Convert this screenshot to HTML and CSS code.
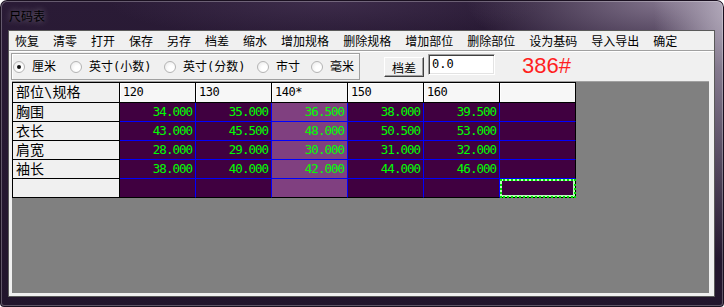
FILE: index.html
```html
<!DOCTYPE html>
<html>
<head>
    <title>尺码表</title>
    <link rel="stylesheet" href="styles.css">
</head>
<body>
    <div class="window">
        <div class="titlebar"><span>尺码表</span></div>
        <div class="client">
            <div class="menubar">
                <span>恢复</span>
                <span>清零</span>
                <span>打开</span>
                <span>保存</span>
                <span>另存</span>
                <span>档差</span>
                <span>缩水</span>
                <span>增加规格</span>
                <span>删除规格</span>
                <span>增加部位</span>
                <span>删除部位</span>
                <span>设为基码</span>
                <span>导入导出</span>
                <span>确定</span>
            </div>

            <div class="toolbar">
                <div class="units">
                    <label class="radio cm checked"><i></i>厘米</label>
                    <label class="radio inch"><i></i>英寸(小数)</label>
                    <label class="radio frac"><i></i>英寸(分数)</label>
                    <label class="radio cun"><i></i>市寸</label>
                    <label class="radio mm"><i></i>毫米</label>
                </div>
                <button class="btn">档差</button>
                <div class="field">0.0</div>
                <div class="code">386#</div>
            </div>

            <!-- size grid -->
            <div class="canvas">
                <div class="sheet">
                    <div class="corner">部位\规格</div>
                    <div class="colhead">120</div>
                    <div class="colhead">130</div>
                    <div class="colhead">140*</div>
                    <div class="colhead">150</div>
                    <div class="colhead">160</div>
                    <div class="colhead last"></div>

                    <div class="rowhead">胸围</div>
                    <div class="cell">34.000</div>
                    <div class="cell">35.000</div>
                    <div class="cell base">36.500</div>
                    <div class="cell">38.000</div>
                    <div class="cell">39.500</div>
                    <div class="cell last"></div>

                    <div class="rowhead">衣长</div>
                    <div class="cell">43.000</div>
                    <div class="cell">45.500</div>
                    <div class="cell base">48.000</div>
                    <div class="cell">50.500</div>
                    <div class="cell">53.000</div>
                    <div class="cell last"></div>

                    <div class="rowhead">肩宽</div>
                    <div class="cell">28.000</div>
                    <div class="cell">29.000</div>
                    <div class="cell base">30.000</div>
                    <div class="cell">31.000</div>
                    <div class="cell">32.000</div>
                    <div class="cell last"></div>

                    <div class="rowhead">袖长</div>
                    <div class="cell">38.000</div>
                    <div class="cell">40.000</div>
                    <div class="cell base">42.000</div>
                    <div class="cell">44.000</div>
                    <div class="cell">46.000</div>
                    <div class="cell last"></div>

                    <div class="rowhead bottom"></div>
                    <div class="cell bottom"></div>
                    <div class="cell bottom"></div>
                    <div class="cell base bottom"></div>
                    <div class="cell bottom"></div>
                    <div class="cell bottom"></div>
                    <div class="cell last bottom focus"></div>
                </div>
            </div>
        </div>
    </div>
</body>
</html>
```

FILE: styles.css
```css
body {
    margin: 0;
    background-color: #ffffff;
    font-family: "DejaVu Sans Mono", "Noto Sans CJK SC", monospace;
    font-size: 12px;
    color: #000;
}
.window {
    width: 724px;
    height: 307px;
    box-sizing: border-box;
    padding: 0 9px 10px 8px;
    display: flex;
    flex-direction: column;
    border-radius: 7px 7px 4px 4px;
    background:
        radial-gradient(ellipse 70px 260px at 100% 0%, rgba(190, 182, 198, 0.85), rgba(190, 182, 198, 0) 100%),
        radial-gradient(ellipse 200px 70px at 92% 0%, rgba(140, 126, 150, 0.9), rgba(140, 126, 150, 0) 100%),
        radial-gradient(ellipse 220px 40px at 45% 0%, rgba(70, 52, 84, 0.7), rgba(70, 52, 84, 0) 100%),
        linear-gradient(180deg, #2a1b36 0%, #22152c 100%);
    box-shadow: inset 0 0 0 1px #1a1020, inset 0 0 0 2px rgba(255, 255, 255, 0.28);
}
.titlebar {
    height: 30px;
    line-height: 31px;
    padding-left: 1px;
    font-family: "Noto Sans CJK SC", sans-serif;
    font-size: 12px;
}
.titlebar span {
    color: #000;
    text-shadow: 0 0 6px rgba(255, 255, 255, 0.45);
}
.client {
    flex: 1;
    display: flex;
    flex-direction: column;
    background-color: #f0f0f0;
    border: 1px solid #5a5a5a;
}
.menubar {
    height: 19px;
    line-height: 19px;
    display: flex;
    gap: 14px;
    padding-left: 6px;
    border-bottom: 1px solid #a0a0a0;
    font-family: "Noto Sans CJK SC", sans-serif;
}
.toolbar {
    height: 30px;
    display: flex;
    align-items: flex-start;
    padding-left: 2px;
    box-shadow: inset 0 1px #ffffff;
}
.units {
    margin-top: 2px;
    width: 349px;
    height: 27px;
    box-sizing: border-box;
    display: flex;
    align-items: center;
    padding-left: 1px;
    border: 1px solid #a0a0a0;
    box-shadow: inset 1px 1px #ffffff;
}
.radio {
    display: flex;
    align-items: center;
    gap: 7px;
    line-height: 16px;
}
.radio i {
    width: 12px;
    height: 12px;
    box-sizing: border-box;
    border-radius: 50%;
    border: 1px solid #b4b4b4;
    background: radial-gradient(circle at 65% 65%, #ffffff 30%, #e6e6e6 100%);
    display: flex;
    align-items: center;
    justify-content: center;
}
.radio.checked i::after {
    content: "";
    width: 4px;
    height: 4px;
    border-radius: 50%;
    background-color: #111;
}
.radio.cm { width: 57px; }
.radio.inch { width: 94px; }
.radio.frac { width: 93px; }
.radio.cun { width: 54px; }
.radio.mm { width: 48px; }
.btn {
    margin: 6px 0 0 24px;
    width: 40px;
    height: 20px;
    padding: 0;
    font-family: "Noto Sans CJK SC", sans-serif;
    font-size: 12px;
    line-height: 17px;
    background-color: #f0f0f0;
    border: 1px solid;
    border-color: #ffffff #404040 #404040 #ffffff;
    box-shadow: inset -1px -1px #a0a0a0;
}
.field {
    margin: 3px 0 0 4px;
    width: 67px;
    height: 21px;
    box-sizing: border-box;
    padding-left: 3px;
    line-height: 19px;
    background-color: #ffffff;
    border: 1px solid;
    border-color: #a0a0a0 #ffffff #ffffff #a0a0a0;
    box-shadow: inset 1px 1px #404040, inset -1px -1px #e3e3e3;
}
.code {
    margin: 4px 0 0 27px;
    font-family: "Liberation Sans", Arial, sans-serif;
    font-size: 22px;
    line-height: 22px;
    color: #ff1f1f;
}
.canvas {
    flex: 1;
    margin: 0 5px 3px 3px;
    background-color: #808080;
    border-top: 1px solid #a0a0a0;
}
.sheet {
    width: max-content;
    display: grid;
    grid-template-columns: 107px repeat(6, 76px);
    grid-template-rows: 20px repeat(5, 19px);
    border-left: 1px solid #000;
    border-top: 1px solid #000;
}
.sheet > div {
    box-sizing: border-box;
    border-right: 1px solid #000;
    border-bottom: 1px solid #000;
    white-space: nowrap;
    overflow: hidden;
}
.corner, .rowhead {
    background-color: #f0f0f0;
    padding-left: 3px;
    font-size: 14px;
    line-height: 18px;
}
.colhead {
    background-color: #f7f7f7;
    padding-left: 3px;
    line-height: 19px;
    letter-spacing: -0.5px;
    box-shadow: inset 1px 1px #ffffff;
}
.sheet > .cell {
    background-color: #400040;
    color: #00ff00;
    text-align: right;
    padding-right: 3px;
    font-size: 12.5px;
    line-height: 18px;
    letter-spacing: -1px;
    border-right-color: #0000ff;
    border-bottom-color: #0000ff;
}
.sheet > .cell.base {
    background-color: #804080;
}
.sheet > .cell.last {
    border-right-color: #000;
}
.sheet > .cell.bottom {
    border-bottom-color: #000;
}
.sheet > .cell.focus {
    box-shadow: inset 0 0 0 2px #b8ffb8;
    outline: 2px dotted #00e000;
    outline-offset: -2px;
}
```
